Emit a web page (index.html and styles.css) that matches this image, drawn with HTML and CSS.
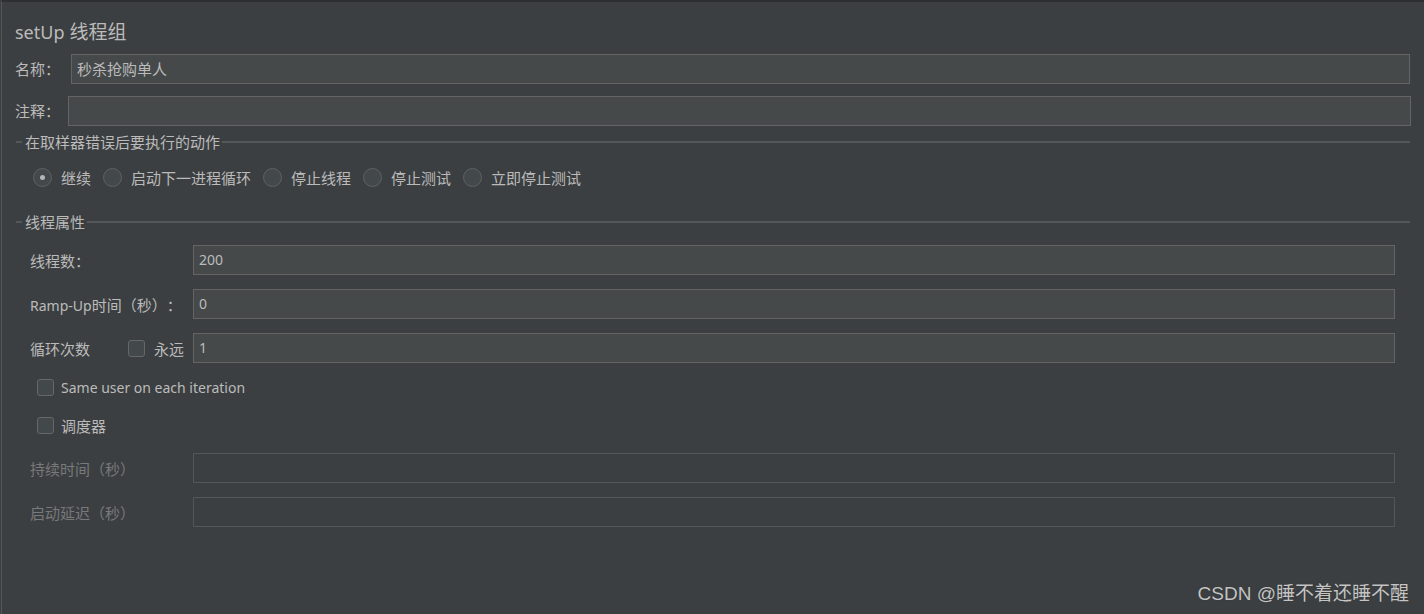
FILE: index.html
```html
<!DOCTYPE html>
<html lang="zh">
<head>
<meta charset="utf-8">
<title>setUp 线程组</title>
<link rel="stylesheet" href="styles.css">
</head>
<body>
<div class="frame">
  <div class="title"><span class="lat">setUp</span> 线程组</div>

  <div class="row name-row">
    <span class="lbl">名称<span class="p">：</span></span>
    <div class="input">秒杀抢购单人</div>
  </div>
  <div class="row comment-row">
    <span class="lbl">注释<span class="p">：</span></span>
    <div class="input"></div>
  </div>

  <div class="legend legend-err"><span class="dash"></span><span class="ltext">在取样器错误后要执行的动作</span><span class="line"></span></div>

  <div class="radios">
    <label class="radio"><span class="circle on"></span><span>继续</span></label>
    <label class="radio"><span class="circle"></span><span>启动下一进程循环</span></label>
    <label class="radio"><span class="circle"></span><span>停止线程</span></label>
    <label class="radio"><span class="circle"></span><span>停止测试</span></label>
    <label class="radio"><span class="circle"></span><span>立即停止测试</span></label>
  </div>

  <div class="legend legend-thread"><span class="dash"></span><span class="ltext">线程属性</span><span class="line"></span></div>

  <div class="props">
    <div class="prow">
      <span class="plbl">线程数<span class="p">：</span></span>
      <div class="input lat">200</div>
    </div>
    <div class="prow">
      <span class="plbl"><span class="lat">Ramp-Up</span>时间<span class="p">（</span>秒<span class="p">）：</span></span>
      <div class="input lat">0</div>
    </div>
    <div class="prow">
      <span class="plbl loop"><span>循环次数</span><span class="forever"><span class="box"></span><span>永远</span></span></span>
      <div class="input lat">1</div>
    </div>
    <label class="check same"><span class="box"></span><span class="lat">Same user on each iteration</span></label>
    <label class="check sched"><span class="box"></span><span>调度器</span></label>
    <div class="prow dis first-dis">
      <span class="plbl">持续时间<span class="p">（</span>秒<span class="p">）</span></span>
      <div class="input"></div>
    </div>
    <div class="prow dis">
      <span class="plbl">启动延迟<span class="p">（</span>秒<span class="p">）</span></span>
      <div class="input"></div>
    </div>
  </div>

  <div class="watermark">CSDN @睡不着还睡不醒</div>
</div>
</body>
</html>
```

FILE: styles.css
```css
html, body {
  margin: 0;
  padding: 0;
  background: #3c3f41;
}
body {
  font-family: "Noto Sans", "Noto Sans CJK SC", sans-serif;
  font-size: 15px;
  color: #bbbbbb;
  width: 1424px;
  height: 614px;
  overflow: hidden;
  text-spacing-trim: space-all;
}
.lat { font-size: 14px; }
.p { font-family: "Noto Sans CJK TC", "Noto Sans CJK SC", sans-serif; }
.frame {
  position: relative;
  box-sizing: border-box;
  height: 614px;
  margin-left: 1px;
  border-left: 1px solid #55585a;
  border-top: 2px solid #2d2f30;
  padding-top: 18px;
}
.title {
  height: 24px;
  line-height: 24px;
  font-size: 19px;
  padding-left: 13px;
  color: #bbbbbb;
}
.title .lat { font-size: 18px; }
.row {
  display: flex;
  align-items: center;
  height: 30px;
  padding-left: 13px;
}
.name-row { margin-top: 10px; padding-right: 14px; }
.comment-row { margin-top: 12px; padding-right: 13px; }
.lbl {
  line-height: 30px;
  white-space: nowrap;
}
.name-row .lbl { width: 56px; flex: none; }
.comment-row .lbl { width: 53px; flex: none; }
.input {
  flex: 1;
  box-sizing: border-box;
  height: 30px;
  line-height: 28px;
  background: #45494a;
  border: 1px solid #646464;
  padding-left: 5px;
  color: #bbbbbb;
}
.legend {
  display: flex;
  align-items: center;
  height: 16px;
  padding-left: 14px;
  padding-right: 14px;
}
.legend-err { margin-top: 8px; }
.legend-thread { margin-top: 27px; }
.dash {
  width: 6px;
  height: 2px;
  background: #55585a;
  margin-right: 3px;
}
.ltext {
  line-height: 16px;
  white-space: nowrap;
  margin-right: 2px;
}
.line {
  flex: 1;
  height: 2px;
  background: #55585a;
}
.radios {
  display: flex;
  align-items: center;
  height: 20px;
  margin-top: 17px;
  padding-left: 31px;
}
.radio {
  display: flex;
  align-items: center;
  margin-right: 12px;
}
.circle {
  box-sizing: border-box;
  width: 19px;
  height: 19px;
  border-radius: 50%;
  border: 1px solid #5e6163;
  background: #43494a;
  margin-right: 9px;
  display: flex;
  align-items: center;
  justify-content: center;
}
.circle.on::after {
  content: "";
  width: 5px;
  height: 5px;
  border-radius: 50%;
  background: #b5b5b5;
}
.props {
  margin-top: 15px;
  padding-left: 28px;
  padding-right: 29px;
}
.prow {
  display: flex;
  align-items: center;
  height: 30px;
  margin-bottom: 14px;
}
.plbl {
  width: 163px;
  flex: none;
  white-space: nowrap;
}
.loop {
  display: flex;
  align-items: center;
}
.forever {
  display: flex;
  align-items: center;
  margin-left: 38px;
}
.box {
  box-sizing: border-box;
  width: 17px;
  height: 17px;
  border: 1px solid #65686a;
  border-radius: 3px;
  background: #43494a;
  margin-right: 9px;
  flex: none;
}
.check {
  display: flex;
  align-items: center;
  height: 20px;
  padding-left: 7px;
}
.check .box { margin-right: 7px; }
.same { margin-top: 1px; }
.sched { margin-top: 18px; }
.first-dis { margin-top: 18px; }
.dis .plbl { color: #77797b; }
.dis .input {
  background: #3c3f41;
  border-color: #545759;
}
.watermark {
  position: absolute;
  right: 15px;
  bottom: 9px;
  font-family: "Liberation Sans", "Noto Sans CJK SC", sans-serif;
  font-size: 19px;
  color: #c4c4c4;
  text-shadow: 0 0 1px #2a2a2a;
}
```
